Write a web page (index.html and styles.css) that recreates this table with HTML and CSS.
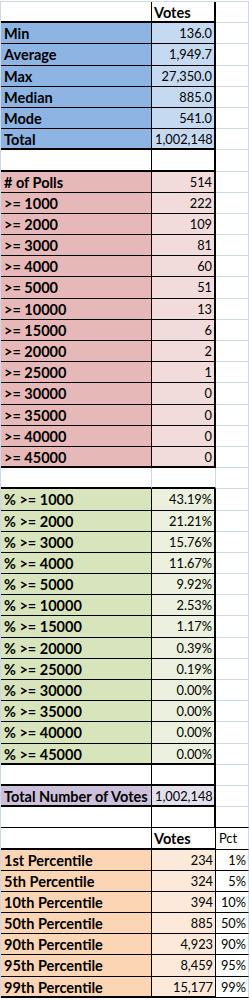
FILE: index.html
```html
<!DOCTYPE html>
<html lang="en">
<head>
<meta charset="utf-8">
<title>Poll votes summary</title>
<link rel="stylesheet" href="styles.css">
</head>
<body>
<div class="sheet">
  <div class="c rk bk2"></div><div class="c hd rk2 bk2">Votes</div><div class="c"></div>

  <div class="c lab bl-a rk bk">Min</div><div class="c num bl-v rk2 bk">136.0</div><div class="c"></div>
  <div class="c lab bl-a rk bk">Average</div><div class="c num bl-v rk2 bk">1,949.7</div><div class="c"></div>
  <div class="c lab bl-a rk bk">Max</div><div class="c num bl-v rk2 bk">27,350.0</div><div class="c"></div>
  <div class="c lab bl-a rk bk">Median</div><div class="c num bl-v rk2 bk">885.0</div><div class="c"></div>
  <div class="c lab bl-a rk bk">Mode</div><div class="c num bl-v rk2 bk">541.0</div><div class="c"></div>
  <div class="c lab bl-a rk bk2">Total</div><div class="c num bl-v rk2 bk2">1,002,148</div><div class="c"></div>

  <div class="c rk bk2"></div><div class="c rk2 bk2"></div><div class="c"></div>

  <div class="c lab rd-a rk bk"># of Polls</div><div class="c num rd-v rk2 bk">514</div><div class="c"></div>
  <div class="c lab rd-a rk bk">&gt;= 1000</div><div class="c num rd-v rk2 bk">222</div><div class="c"></div>
  <div class="c lab rd-a rk bk">&gt;= 2000</div><div class="c num rd-v rk2 bk">109</div><div class="c"></div>
  <div class="c lab rd-a rk bk">&gt;= 3000</div><div class="c num rd-v rk2 bk">81</div><div class="c"></div>
  <div class="c lab rd-a rk bk">&gt;= 4000</div><div class="c num rd-v rk2 bk">60</div><div class="c"></div>
  <div class="c lab rd-a rk bk">&gt;= 5000</div><div class="c num rd-v rk2 bk">51</div><div class="c"></div>
  <div class="c lab rd-a rk bk">&gt;= 10000</div><div class="c num rd-v rk2 bk">13</div><div class="c"></div>
  <div class="c lab rd-a rk bk">&gt;= 15000</div><div class="c num rd-v rk2 bk">6</div><div class="c"></div>
  <div class="c lab rd-a rk bk">&gt;= 20000</div><div class="c num rd-v rk2 bk">2</div><div class="c"></div>
  <div class="c lab rd-a rk bk">&gt;= 25000</div><div class="c num rd-v rk2 bk">1</div><div class="c"></div>
  <div class="c lab rd-a rk bk">&gt;= 30000</div><div class="c num rd-v rk2 bk">0</div><div class="c"></div>
  <div class="c lab rd-a rk bk">&gt;= 35000</div><div class="c num rd-v rk2 bk">0</div><div class="c"></div>
  <div class="c lab rd-a rk bk">&gt;= 40000</div><div class="c num rd-v rk2 bk">0</div><div class="c"></div>
  <div class="c lab rd-a rk bk2">&gt;= 45000</div><div class="c num rd-v rk2 bk2">0</div><div class="c"></div>

  <div class="c bk2"></div><div class="c bk2"></div><div class="c"></div>

  <div class="c lab gr-a rk bk">% &gt;= 1000</div><div class="c num gr-v rk2 bk">43.19%</div><div class="c"></div>
  <div class="c lab gr-a rk bk">% &gt;= 2000</div><div class="c num gr-v rk2 bk">21.21%</div><div class="c"></div>
  <div class="c lab gr-a rk bk">% &gt;= 3000</div><div class="c num gr-v rk2 bk">15.76%</div><div class="c"></div>
  <div class="c lab gr-a rk bk">% &gt;= 4000</div><div class="c num gr-v rk2 bk">11.67%</div><div class="c"></div>
  <div class="c lab gr-a rk bk">% &gt;= 5000</div><div class="c num gr-v rk2 bk">9.92%</div><div class="c"></div>
  <div class="c lab gr-a rk bk">% &gt;= 10000</div><div class="c num gr-v rk2 bk">2.53%</div><div class="c"></div>
  <div class="c lab gr-a rk bk">% &gt;= 15000</div><div class="c num gr-v rk2 bk">1.17%</div><div class="c"></div>
  <div class="c lab gr-a rk bk">% &gt;= 20000</div><div class="c num gr-v rk2 bk">0.39%</div><div class="c"></div>
  <div class="c lab gr-a rk bk">% &gt;= 25000</div><div class="c num gr-v rk2 bk">0.19%</div><div class="c"></div>
  <div class="c lab gr-a rk bk">% &gt;= 30000</div><div class="c num gr-v rk2 bk">0.00%</div><div class="c"></div>
  <div class="c lab gr-a rk bk">% &gt;= 35000</div><div class="c num gr-v rk2 bk">0.00%</div><div class="c"></div>
  <div class="c lab gr-a rk bk">% &gt;= 40000</div><div class="c num gr-v rk2 bk">0.00%</div><div class="c"></div>
  <div class="c lab gr-a rk bk2">% &gt;= 45000</div><div class="c num gr-v rk2 bk2">0.00%</div><div class="c"></div>

  <div class="c rk bk2"></div><div class="c rk2 bk2"></div><div class="c"></div>

  <div class="c lab pu-a rk bk2">Total Number of Votes</div><div class="c num pu-v rk2 bk2">1,002,148</div><div class="c"></div>

  <div class="c rk bk"></div><div class="c rk2 bk"></div><div class="c bk"></div>

  <div class="c rk bk2"></div><div class="c hd rk bk2">Votes</div><div class="c pct-hd bk">Pct</div>

  <div class="c lab or-a rk bk">1st Percentile</div><div class="c num or-v rk bk">234</div><div class="c num bk">1%</div>
  <div class="c lab or-a rk bk">5th Percentile</div><div class="c num or-v rk bk">324</div><div class="c num bk">5%</div>
  <div class="c lab or-a rk bk">10th Percentile</div><div class="c num or-v rk bk">394</div><div class="c num bk">10%</div>
  <div class="c lab or-a rk bk">50th Percentile</div><div class="c num or-v rk bk">885</div><div class="c num bk">50%</div>
  <div class="c lab or-a rk bk">90th Percentile</div><div class="c num or-v rk bk">4,923</div><div class="c num bk">90%</div>
  <div class="c lab or-a rk bk">95th Percentile</div><div class="c num or-v rk bk">8,459</div><div class="c num bk">95%</div>
  <div class="c lab or-a rk bk2">99th Percentile</div><div class="c num or-v rk bk2">15,177</div><div class="c num bk">99%</div>
</div>
</body>
</html>
```
FILE: styles.css
```css
:root {
  --grid: #d0d7e5;
  --ink: #000000;
}

html, body {
  margin: 0;
  padding: 0;
  background: #ffffff;
}

body {
  padding-top: 1px;
  font-family: Lato, "Liberation Sans", sans-serif;
  font-size: 12.8px;
  color: var(--ink);
}

.sheet {
  display: grid;
  grid-template-columns: 151px 64px 33px;
  grid-auto-rows: 21.2px;
  width: max-content;
  border-left: 1px solid var(--grid);
  border-top: 1px solid var(--grid);
}

.c {
  box-sizing: border-box;
  border-right: 1px solid var(--grid);
  border-bottom: 1px solid var(--grid);
  padding: 0 2px 0 3px;
  line-height: 21px;
  white-space: nowrap;
  overflow: hidden;
}

.lab { font-weight: 700; font-size: 14.5px; }
.hd { font-weight: 700; font-size: 14.5px; padding-left: 2px; }
.pct-hd { padding-left: 3px; }
.num { text-align: right; }

.rk { border-right-color: var(--ink); }
.rk2 { border-right: 2px solid var(--ink); }
.bk { border-bottom-color: var(--ink); }
.bk2 { border-bottom: 2px solid var(--ink); }

.bl-a { background: #8db4e2; }
.bl-v { background: #c5d9f1; }
.rd-a { background: #e6b8b7; }
.rd-v { background: #f2dcdb; }
.gr-a { background: #d8e4bc; }
.gr-v { background: #ebf1de; }
.pu-a { background: #ccc0da; }
.pu-v { background: #e4dfec; }
.or-a { background: #fcd5b4; }
.or-v { background: #fde9d9; }
```
